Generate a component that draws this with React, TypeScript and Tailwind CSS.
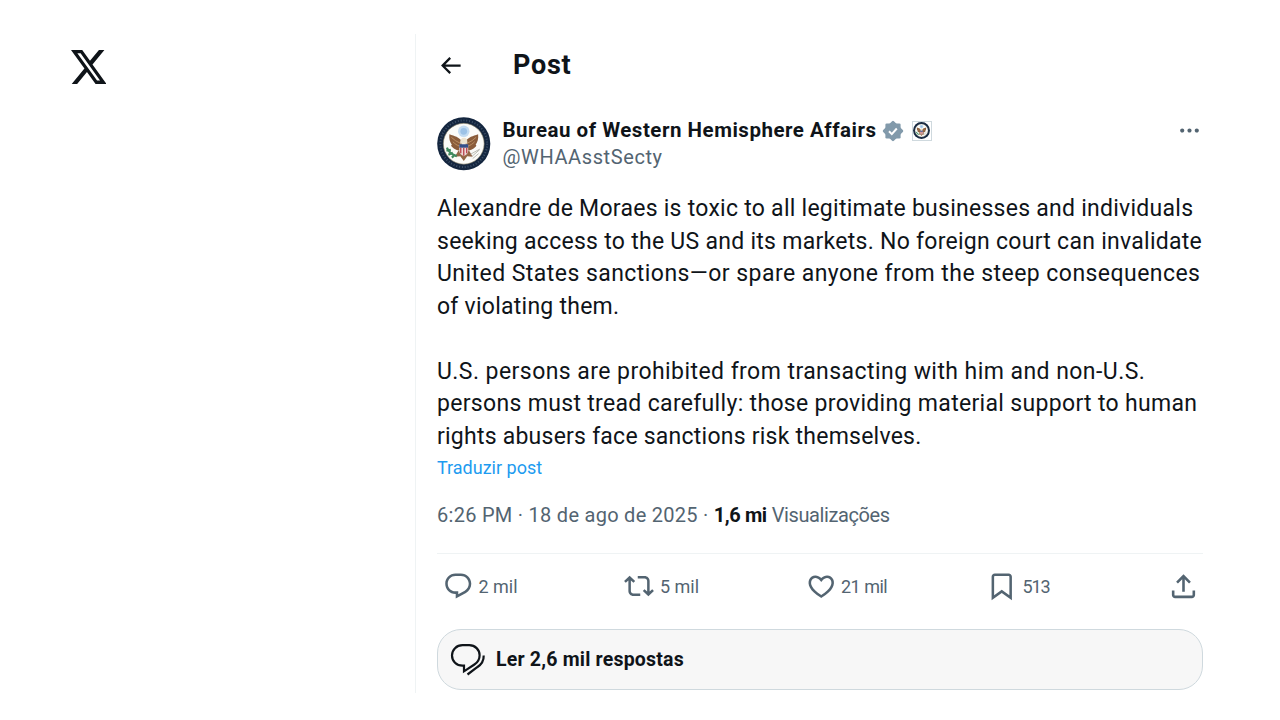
import React from 'react';

interface IconProps {
    path: string;
    className?: string;
}

interface PostLine {
    text: string;
    tracking: string;
}

interface PostAction {
    id: string;
    label: string;
    path: string;
    iconClass: string;
    labelClass: string;
}

const icons = {
    back: 'M7.414 13l5.043 5.04-1.414 1.42L3.586 12l7.457-7.46 1.414 1.42L7.414 11H21v2H7.414z',
    more: 'M3 12c0-1.1.9-2 2-2s2 .9 2 2-.9 2-2 2-2-.9-2-2zm9 2c1.1 0 2-.9 2-2s-.9-2-2-2-2 .9-2 2 .9 2 2 2zm7 0c1.1 0 2-.9 2-2s-.9-2-2-2-2 .9-2 2 .9 2 2 2z',
    reply: 'M1.751 10c0-4.42 3.584-8 8.005-8h4.366c4.49 0 8.129 3.64 8.129 8.13 0 2.96-1.607 5.68-4.196 7.11l-8.054 4.46v-3.69h-.067c-4.49.1-8.183-3.51-8.183-8.01zm8.005-6c-3.317 0-6.005 2.69-6.005 6 0 3.37 2.77 6.08 6.138 6.01l.351-.01h1.761v2.3l5.087-2.81c1.951-1.08 3.163-3.13 3.163-5.36 0-3.39-2.744-6.13-6.129-6.13H9.756z',
    repost: 'M4.5 3.88l4.432 4.14-1.364 1.46L5.5 7.55V16c0 1.1.896 2 2 2H13v2H7.5c-2.209 0-4-1.79-4-4V7.55L1.432 9.48.068 8.02 4.5 3.88zM16.5 6H11V4h5.5c2.209 0 4 1.79 4 4v8.45l2.068-1.93 1.364 1.46-4.432 4.14-4.432-4.14 1.364-1.46 2.068 1.93V8c0-1.1-.896-2-2-2z',
    like: 'M16.697 5.5c-1.222-.06-2.679.51-3.89 2.16l-.805 1.09-.806-1.09C9.984 6.01 8.526 5.44 7.304 5.5c-1.243.07-2.349.78-2.91 1.91-.552 1.12-.633 2.78.479 4.82 1.074 1.97 3.257 4.27 7.129 6.61 3.87-2.34 6.052-4.64 7.126-6.61 1.111-2.04 1.03-3.7.477-4.82-.561-1.13-1.666-1.84-2.908-1.91zm4.187 7.69c-1.351 2.48-4.001 5.12-8.379 7.67l-.503.3-.504-.3c-4.379-2.55-7.029-5.19-8.382-7.67-1.36-2.5-1.41-4.86-.514-6.67.887-1.79 2.647-2.91 4.601-3.01 1.651-.09 3.368.56 4.798 2.01 1.429-1.45 3.146-2.1 4.796-2.01 1.954.1 3.714 1.22 4.601 3.01.896 1.81.846 4.17-.514 6.67z',
    bookmark: 'M4 4.5C4 3.12 5.119 2 6.5 2h11C18.881 2 20 3.12 20 4.5v18.44l-8-5.71-8 5.71V4.5zM6.5 4c-.276 0-.5.22-.5.5v14.56l6-4.29 6 4.29V4.5c0-.28-.224-.5-.5-.5h-11z',
    share: 'M12 2.59l5.7 5.7-1.41 1.42L13 6.41V16h-2V6.41l-3.3 3.3-1.41-1.42L12 2.59zM21 15l-.02 3.51c0 1.38-1.12 2.49-2.5 2.49H5.5C4.11 21 3 19.88 3 18.5V15h2v3.5c0 .28.22.5.5.5h12.98c.28 0 .5-.22.5-.5L19 15h2z',
};

const paragraphs: PostLine[][] = [
    [
        { text: 'Alexandre de Moraes is toxic to all legitimate businesses and individuals', tracking: 'tracking-[0.26px]' },
        { text: 'seeking access to the US and its markets. No foreign court can invalidate', tracking: 'tracking-[0.275px]' },
        { text: 'United States sanctions—or spare anyone from the steep consequences', tracking: 'tracking-[0.45px]' },
        { text: 'of violating them.', tracking: 'tracking-[0.25px]' },
    ],
    [
        { text: 'U.S. persons are prohibited from transacting with him and non-U.S.', tracking: 'tracking-[0.44px]' },
        { text: 'persons must tread carefully: those providing material support to human', tracking: 'tracking-[0.32px]' },
        { text: 'rights abusers face sanctions risk themselves.', tracking: 'tracking-[0.235px]' },
    ],
];

const actions: PostAction[] = [
    { id: 'reply', label: '2 mil', path: icons.reply, iconClass: 'size-[30.5px]', labelClass: 'ml-[5.5px]' },
    { id: 'repost', label: '5 mil', path: icons.repost, iconClass: 'size-[30px]', labelClass: 'ml-[6px]' },
    { id: 'like', label: '21 mil', path: icons.like, iconClass: 'size-[30.5px]', labelClass: 'ml-[5px] tracking-[-0.5px]' },
    { id: 'bookmark', label: '513', path: icons.bookmark, iconClass: 'size-[30.5px] -translate-x-[0.5px]', labelClass: 'ml-[5px] tracking-[-1.1px]' },
];

const Icon = ({ path, className }: IconProps) => (
    <svg viewBox="0 0 24 24" fill="currentColor" className={`shrink-0 ${className ?? ''}`}>
        <path d={path} />
    </svg>
);

const Logo = () => (
    <svg viewBox="1.254 2.25 21.578 19.5" preserveAspectRatio="none" className="h-[34px] w-[35.5px]" fill="currentColor">
        <path d="M18.244 2.25h3.308l-7.227 8.26 8.502 11.24H16.17l-5.214-6.817L4.99 21.75H1.68l7.73-8.835L1.254 2.25H8.08l4.713 6.231zm-1.161 17.52h1.833L7.084 4.126H5.117z" />
    </svg>
);

// Round department seal: dark ring, eagle, shield and olive branch
const Seal = ({ className }: { className: string }) => (
    <svg viewBox="0 0 54 54" className={`shrink-0 ${className}`}>
        <circle cx="27" cy="27" r="26.8" fill="#14263f" />
        <circle cx="27" cy="27" r="23.6" fill="none" stroke="#7f93a8" strokeWidth="2" strokeDasharray="1 1.9" opacity="0.4" />
        <circle cx="27" cy="27" r="20.6" fill="#fbfbf8" stroke="#8d8468" strokeWidth="0.6" />
        <circle cx="27" cy="14.5" r="5.8" fill="#c3dcf2" />
        <circle cx="27" cy="14.5" r="3.4" fill="#9cc2e6" />
        <path d="M25.500 25C22 20 18 19.500 12.500 17.500c-.5 4.500.5 8 2.500 10.500-1 .5-1 1 0 2 2.500 2.500 6 4 9 4zM28.500 25c3.500-5 7.500-5.500 13-7.500.5 4.500-.5 8-2.500 10.500 1 .5 1 1 0 2-2.500 2.500-6 4-9 4z" fill="#8a5c3a" />
        <path d="M14.500 20.500c2.500 2.500 5.500 4.500 9 6M16 25c2 2 4 3.500 7 4.500M39.500 20.500c-2.500 2.500-5.500 4.500-9 6M38 25c-2 2-4 3.500-7 4.500" fill="none" stroke="#b98f62" strokeWidth="1" />
        <path d="M21.500 34l-3.500 6 5.500-.5 3.500 5 3.500-5 5.500.5-3.500-6z" fill="#936646" />
        <path d="M23.500 27c-.5-3.500 1-6 3.500-6s4 1.500 3.500 6z" fill="#ede3cf" />
        <path d="M22.500 28h9v6c0 3-2.500 4.500-4.500 5.500-2-1-4.500-2.500-4.500-5.500z" fill="#ecd9d8" />
        <path d="M22.500 27.500h9v3.500h-9z" fill="#35508a" />
        <path d="M24 31v5.500M27 31v8M30 31v5.500" stroke="#b93f48" strokeWidth="1.300" />
        <path d="M10 31c1.500 4 4.500 7 10 8.500M9.500 34l4.500-1M11.500 38l4.500-2M15 41l3-3" fill="none" stroke="#3f8a5e" strokeWidth="2.200" />
        <path d="M35 40l8-7M34 37.500l9-5M36 42l6-5" stroke="#b3b5ac" strokeWidth="0.900" />
    </svg>
);

// Eight-pointed government badge
const VerifiedBadge = () => (
    <svg viewBox="0 0 22 22" className="size-[22px] shrink-0">
        <g fill="#829aab">
            <rect x="3.400" y="3.400" width="15.200" height="15.200" rx="1.300" />
            <rect x="3.400" y="3.400" width="15.200" height="15.200" rx="1.300" transform="rotate(45 11 11)" />
        </g>
        <path d="M7 11.300l2.800 2.800 5-5.600" fill="none" stroke="#fff" strokeWidth="2" />
    </svg>
);

const RepliesIcon = () => (
    <svg viewBox="0 0 36 34" className="h-[34px] w-9 shrink-0" fill="none" stroke="#0f1419" strokeWidth="2.200">
        <path d="M12.500 2.200h6.800c5.800 0 10.300 4.400 10.300 10 0 4-2 7.200-5.200 9.300L14 28.300v-5.600h-1.500C6.500 22.700 2 18.200 2 12.500S6.500 2.200 12.500 2.200z" />
        <path d="M33.700 12.500c.2 5.200-2.300 9-6.500 11.700L17.500 31.500" />
    </svg>
);

const PostHeader = () => (
    <header className="flex h-[62px] items-center">
        <Icon path={icons.back} className="size-[27px] text-[#0f1419]" />
        <h1 className="ml-[49px] pt-px text-[27px] font-bold tracking-[0.75px]">Post</h1>
    </header>
);

const AuthorRow = () => (
    <div className="mt-[21px] flex h-[54px]">
        <Seal className="size-[53.5px]" />
        <div className="ml-[12px] flex-1">
            <div className="flex h-[27px] items-center">
                <span className="text-[20.5px] font-bold tracking-[0.514px]">Bureau of Western Hemisphere Affairs</span>
                <span className="ml-[5px]">
                    <VerifiedBadge />
                </span>
                <span className="ml-2 flex size-5 items-center justify-center border border-[#cfd9de] bg-white">
                    <Seal className="size-[17px]" />
                </span>
            </div>
            <div className="flex h-[26px] items-center text-[20px] tracking-[0.6px] text-[#536471]">@WHAAsstSecty</div>
        </div>
        <Icon path={icons.more} className="mr-px mt-px size-[25px] text-[#536471]" />
    </div>
);

const PostBody = () => (
    <div className="mt-[22px] space-y-[32.5px] whitespace-nowrap text-[23px] leading-[32.5px]">
        {paragraphs.map((lines, i) => (
            <p key={i}>
                {lines.map((line) => (
                    <span key={line.text} className={`block ${line.tracking}`}>
                        {line.text}
                    </span>
                ))}
            </p>
        ))}
    </div>
);

const ActionBar = () => (
    <div className="flex h-[64px] items-center pl-[5.5px] text-[18px] text-[#536471]">
        {actions.map((action) => (
            <button key={action.id} className="flex w-[181.5px] items-center">
                <Icon path={action.path} className={action.iconClass} />
                <span className={action.labelClass}>{action.label}</span>
            </button>
        ))}
        <button className="-ml-px">
            <Icon path={icons.share} className="size-[31px]" />
        </button>
    </div>
);

export default function App() {
    return (
        <div className="flex h-[720px] w-[1280px] overflow-hidden bg-white font-[Roboto,sans-serif] text-[#0f1419]">
            <aside className="w-[415px] pl-[70.5px] pt-[49.5px]">
                <Logo />
            </aside>

            <main className="mt-[34px] h-[659px] w-[788px] border-l border-[#eff3f4] pl-[21px]">
                <PostHeader />
                <AuthorRow />
                <PostBody />

                <a className="block h-[33px] text-[18px] leading-[30px] text-[#1d9bf0]">Traduzir post</a>

                <div className="mt-[15px] flex h-[28px] items-center whitespace-pre text-[20px] text-[#536471]">
                    <span className="tracking-[0.28px]">6:26 PM · 18 de ago de 2025 ·</span>
                    <span className="ml-[5px] font-bold tracking-[-0.4px] text-[#0f1419]">1,6 mi</span>
                    <span className="ml-[5px] tracking-[-0.4px]">Visualizações</span>
                </div>

                <div className="mt-[24px] border-t border-[#eff3f4]">
                    <ActionBar />
                </div>

                <button className="mt-[11px] flex h-[61px] w-full items-center rounded-[24px] border border-[#cfd9de] bg-[#f7f7f7] pl-3">
                    <RepliesIcon />
                    <span className="ml-[10px] text-[19.5px] font-bold tracking-[0.2px]">Ler 2,6 mil respostas</span>
                </button>
            </main>
        </div>
    );
}
